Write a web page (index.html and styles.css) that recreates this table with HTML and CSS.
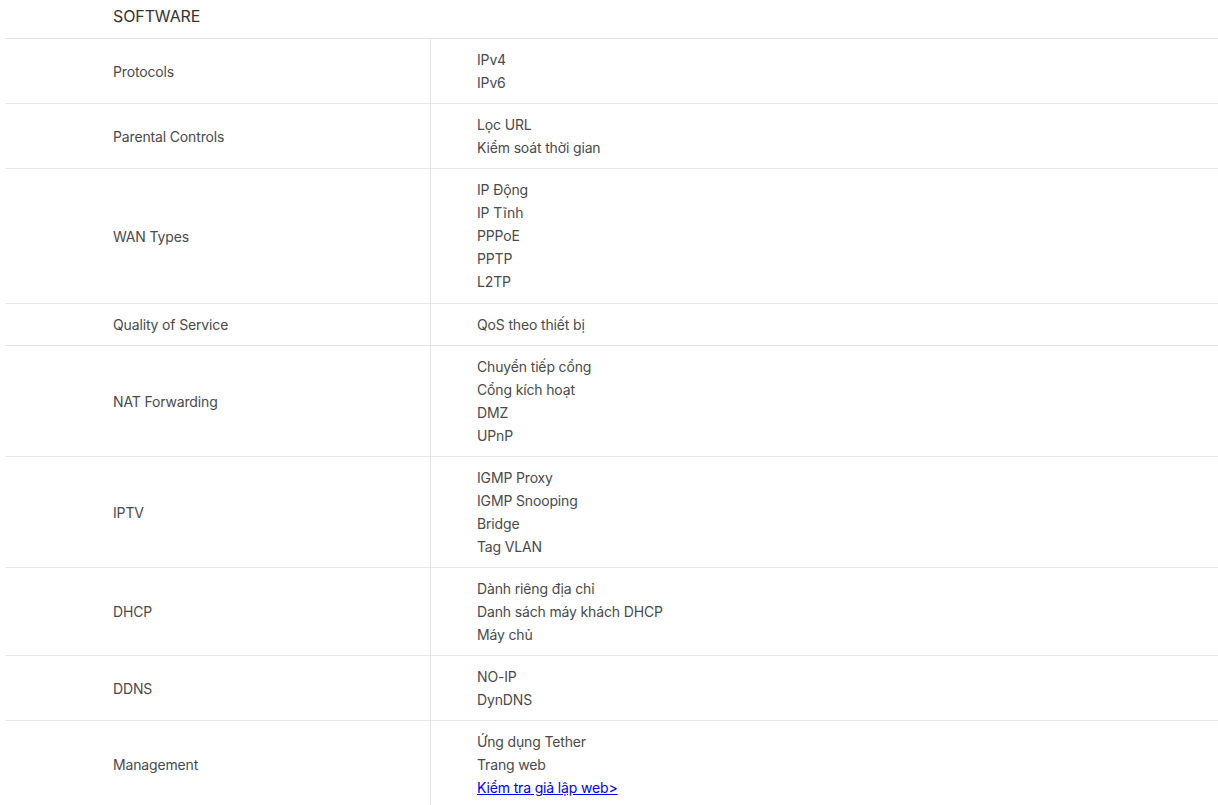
FILE: index.html
```html
<!DOCTYPE html>
<html lang="vi">
<head>
<meta charset="UTF-8" />
<meta name="viewport" content="width=device-width, initial-scale=1" />
<title>Software</title>
<link rel="stylesheet" href="styles.css">
</head>
<body>

<div class="specs">
  <h3 class="specs-title">SOFTWARE</h3>
  <table class="spec-table">
    <tr>
      <th>Protocols</th>
      <td><p>IPv4</p><p>IPv6</p></td>
    </tr>
    <tr>
      <th>Parental Controls</th>
      <td><p>Lọc URL</p><p>Kiểm soát thời gian</p></td>
    </tr>
    <tr class="tall">
      <th>WAN Types</th>
      <td><p>IP Động</p><p>IP Tĩnh</p><p>PPPoE</p><p>PPTP</p><p>L2TP</p></td>
    </tr>
    <tr>
      <th>Quality of Service</th>
      <td><p>QoS theo thiết bị</p></td>
    </tr>
    <tr>
      <th>NAT Forwarding</th>
      <td><p>Chuyển tiếp cổng</p><p>Cổng kích hoạt</p><p>DMZ</p><p>UPnP</p></td>
    </tr>
    <tr>
      <th>IPTV</th>
      <td><p>IGMP Proxy</p><p>IGMP Snooping</p><p>Bridge</p><p>Tag VLAN</p></td>
    </tr>
    <tr>
      <th>DHCP</th>
      <td><p>Dành riêng địa chỉ</p><p>Danh sách máy khách DHCP</p><p>Máy chủ</p></td>
    </tr>
    <tr>
      <th>DDNS</th>
      <td><p>NO-IP</p><p>DynDNS</p></td>
    </tr>
    <tr>
      <th>Management</th>
      <td><p>Ứng dụng Tether</p><p>Trang web</p><p><a href="#">Kiểm tra giả lập web&gt;</a></p></td>
    </tr>
  </table>
</div>

</body>
</html>
```

FILE: styles.css
```css
body {
  margin: 0;
  font-family: Inter, "Noto Sans", sans-serif;
  color: #4a4a4a;
  background: #fff;
}
.specs {
  padding-left: 5px;
}
.specs-title {
  margin: 0;
  padding: 6px 0 0 108px;
  height: 32px;
  font-size: 16px;
  font-weight: 400;
  color: #333;
  line-height: 20px;
  letter-spacing: -0.1px;
}
.spec-table {
  width: 100%;
  border-collapse: collapse;
  font-size: 14px;
  line-height: 23px;
  letter-spacing: -0.15px;
}
.spec-table tr {
  border-top: 1px solid #e6e6ea;
}
.spec-table th {
  width: 317px;
  padding: 9px 0 9px 108px;
  text-align: left;
  font-weight: 400;
  vertical-align: middle;
  border-right: 1px solid #e6e6ea;
}
.spec-table td {
  padding: 9px 0 9px 46px;
  vertical-align: middle;
}
.spec-table tr.tall td {
  padding-bottom: 10px;
}
.spec-table p {
  margin: 0;
}
.spec-table a {
  color: #0000ee;
}
```
